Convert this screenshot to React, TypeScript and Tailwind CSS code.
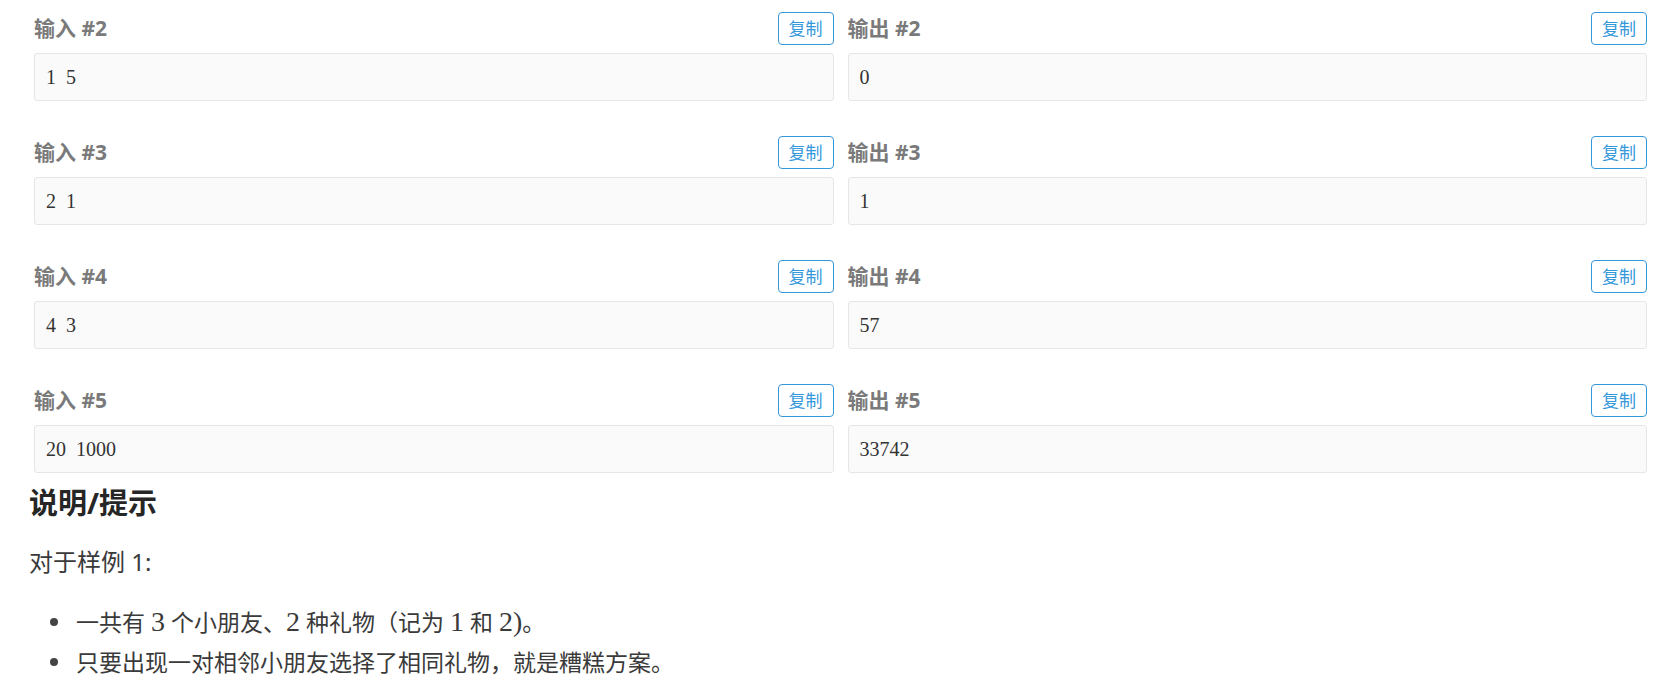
import React from 'react';

const samples = [
  { n: 2, input: '1 5', output: '0' },
  { n: 3, input: '2 1', output: '1' },
  { n: 4, input: '4 3', output: '57' },
  { n: 5, input: '20 1000', output: '33742' },
];

const sans = "font-['Noto_Sans','Noto_Sans_CJK_SC',sans-serif]";

function SampleBlock({ label, value }: { label: string; value: string }) {
  return (
    <div className="flex flex-col gap-[8px]">
      <div className="flex h-[33px] items-center justify-between">
        <span className={`${sans} text-[21px] font-bold text-[#7a7a7a] leading-none`}>{label}</span>
        <button className={`${sans} h-[33px] rounded-[4px] border border-[#3498db] px-[10px] text-[17px] leading-none text-[#3498db] bg-white`}>
          复制
        </button>
      </div>
      <div className="flex h-[48px] items-center rounded-[3px] border border-[#e6e6e6] bg-[#fafafa] px-[11px]">
        <pre className="font-['Liberation_Serif',serif] text-[20px] leading-none text-[#333] [word-spacing:5px]">{value}</pre>
      </div>
    </div>
  );
}

function M({ children }: { children: React.ReactNode }) {
  return <span className="font-['Liberation_Serif',serif] text-[28px]">{children}</span>;
}

export default function App() {
  return (
    <div className={`${sans} min-h-screen w-full bg-white pl-[29px] pr-[30px] pt-[12px] text-[#333]`}>
      <div className="ml-[5px] grid grid-cols-2 gap-x-[14px] gap-y-[35px]">
        {samples.map(s => (
          <React.Fragment key={s.n}>
            <SampleBlock label={`输入 #${s.n}`} value={s.input} />
            <SampleBlock label={`输出 #${s.n}`} value={s.output} />
          </React.Fragment>
        ))}
      </div>

      <h2 className="mt-[12px] h-[36px] text-[29px] font-bold leading-[36px] text-[#262626]">说明/提示</h2>

      <p className="mt-[23px] text-[24px] leading-[36px] text-[#3a3a3a]">对于样例 1:</p>

      <ul className="mt-[22px] text-[23px] text-[#3a3a3a]">
        <li className="flex h-[40px] items-center pl-[21px]">
          <span className="mr-[18px] h-[8px] w-[8px] shrink-0 rounded-full bg-[#444]" />
          <span>
            一共有 <M>3</M> 个小朋友、<M>2</M> 种礼物（记为 <M>1</M> 和 <M>2)</M>。
          </span>
        </li>
        <li className="flex h-[40px] items-center pl-[21px]">
          <span className="mr-[18px] h-[8px] w-[8px] shrink-0 rounded-full bg-[#444]" />
          <span>只要出现一对相邻小朋友选择了相同礼物，就是糟糕方案。</span>
        </li>
      </ul>
    </div>
  );
}
